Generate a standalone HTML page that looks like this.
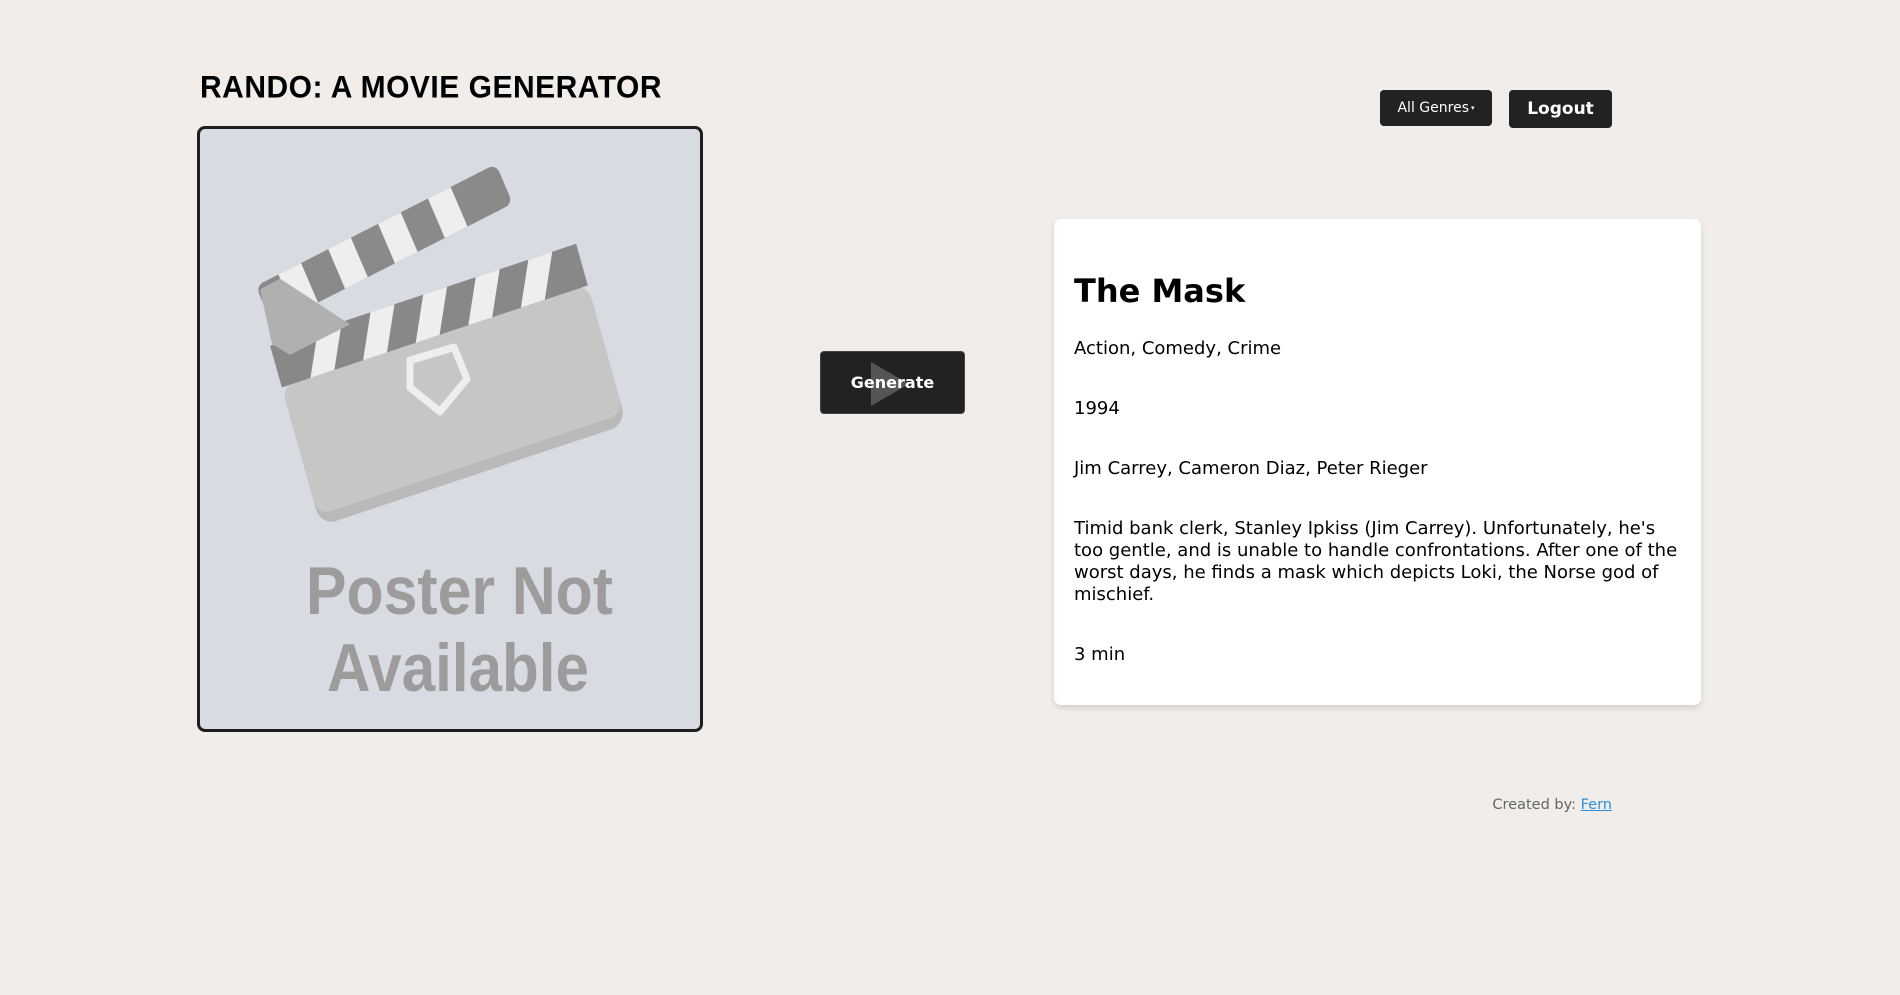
<!DOCTYPE html>
<html><head><meta charset="utf-8">
<style>
html,body{margin:0;padding:0;}
body{width:1900px;height:995px;background:#f0edea;position:relative;overflow:hidden;font-family:"DejaVu Sans","Liberation Sans",sans-serif;color:#000;}
.title{position:absolute;left:200px;top:71px;font-family:"Liberation Sans",sans-serif;font-weight:bold;font-size:30px;letter-spacing:0.5px;transform:scaleY(1.05);white-space:nowrap;}
.poster{position:absolute;left:197px;top:126px;width:500px;height:600px;border:3px solid #1e1e1e;border-radius:8px;background:#d8dbe2;overflow:hidden;}
.btn{position:absolute;background:#222;color:#fff;border-radius:4px;display:flex;align-items:center;justify-content:center;}
.gen{left:820px;top:351px;width:145px;height:63px;font-weight:bold;font-size:16px;border:1px solid #444;box-sizing:border-box;}
.genres{left:1380px;top:90px;width:112px;height:36px;font-size:14px;}
.logout{left:1509px;top:90px;width:103px;height:38px;font-weight:bold;font-size:17px;}
.card{position:absolute;left:1054px;top:219px;width:647px;height:486px;background:#fff;border-radius:7px;box-shadow:0 3px 6px rgba(0,0,0,0.12);}
.card div{position:absolute;left:20px;right:20px;font-size:18px;line-height:22px;}
.credit{position:absolute;right:288px;top:797px;font-size:14.5px;color:#666;}
.credit a{color:#2a8fd8;text-decoration:underline;}
</style></head><body>
<div class="title">RANDO: A MOVIE GENERATOR</div>
<div class="poster">
<svg width="500" height="600" viewBox="0 0 500 600">
 <g transform="translate(-8,-3) scale(1,1.09)">
 <g transform="rotate(-17 255 250)">
  <rect x="100" y="190" width="320" height="135" rx="16" fill="#b9b9b9"/>
  <rect x="100" y="190" width="320" height="125" rx="14" fill="#c6c6c6"/>
  <rect x="100" y="152" width="320" height="40" fill="#888"/>
  <g fill="#eeeeee">
   <polygon points="130,192 150,152 175,152 155,192"/>
   <polygon points="185,192 205,152 230,152 210,192"/>
   <polygon points="240,192 260,152 285,152 265,192"/>
   <polygon points="295,192 315,152 340,152 320,192"/>
   <polygon points="350,192 370,152 395,152 375,192"/>
  </g>
 </g>
 <g transform="rotate(-25 190 110)">
  <rect x="60" y="90" width="265" height="40" rx="8" fill="#8a8a8a"/>
  <g fill="#eeeeee">
   <rect x="85" y="90" width="25" height="40"/>
   <rect x="140" y="90" width="25" height="40"/>
   <rect x="195" y="90" width="25" height="40"/>
   <rect x="250" y="90" width="25" height="40"/>
  </g>
 </g>
 <polygon points="68,150 88,140 158,182 98,210 80,200" fill="#b0b0b0"/>
 <g fill="none" stroke="#eee" stroke-width="7" stroke-linejoin="round">
  <polygon points="218,215 262,203 275,232 248,262 218,240"/>
 </g>
 </g>
 <text x="106" y="485" textLength="307" lengthAdjust="spacingAndGlyphs" font-family="Liberation Sans,sans-serif" font-weight="bold" font-size="68" fill="#9c9c9c">Poster Not</text>
 <text x="127" y="562" textLength="262" lengthAdjust="spacingAndGlyphs" font-family="Liberation Sans,sans-serif" font-weight="bold" font-size="68" fill="#9c9c9c">Available</text>
</svg>
</div>
<div class="btn gen"><svg style="position:absolute;left:48px;top:10px" width="45" height="45"><polygon points="2,0 40,22 2,44" fill="#555"/></svg><span style="position:relative">Generate</span></div>
<div class="btn genres">All Genres<span style="font-size:7px;margin-left:2px">▾</span></div>
<div class="btn logout">Logout</div>
<div class="card">
 <div style="top:52px;font-size:32px;line-height:40px;font-weight:bold">The Mask</div>
 <div style="top:119px">Action, Comedy, Crime</div>
 <div style="top:179px">1994</div>
 <div style="top:239px">Jim Carrey, Cameron Diaz, Peter Rieger</div>
 <div style="top:299px">Timid bank clerk, Stanley Ipkiss (Jim Carrey). Unfortunately, he's too gentle, and is unable to handle confrontations. After one of the worst days, he finds a mask which depicts Loki, the Norse god of mischief.</div>
 <div style="top:425px">3 min</div>
</div>
<div class="credit">Created by: <a>Fern</a></div>
</body></html>
